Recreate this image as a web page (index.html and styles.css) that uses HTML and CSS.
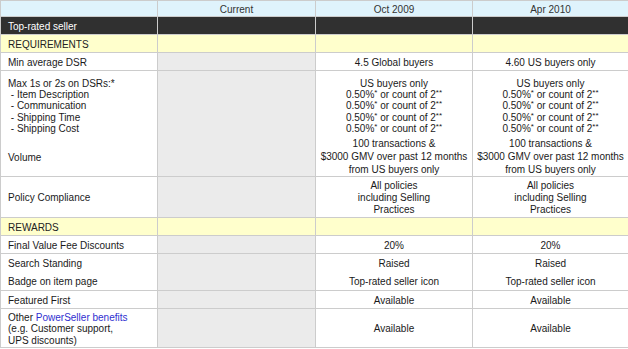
FILE: index.html
```html
<!DOCTYPE html>
<html>
<head>
<meta charset="utf-8">
<link rel="stylesheet" href="styles.css">
</head>
<body>
<table class="cmp">
  <colgroup>
    <col class="c1"><col class="c2"><col class="c3"><col class="c4">
  </colgroup>
  <tr class="head h16">
    <td></td><td class="ctr">Current</td><td class="ctr">Oct 2009</td><td class="ctr">Apr 2010</td>
  </tr>
  <tr class="dark h18">
    <td>Top-rated seller</td><td></td><td></td><td></td>
  </tr>
  <tr class="section h18">
    <td>REQUIREMENTS</td><td></td><td></td><td></td>
  </tr>
  <tr class="row h18">
    <td>Min average DSR</td><td class="cur"></td><td class="ctr">4.5 Global buyers</td><td class="ctr">4.60 US buyers only</td>
  </tr>
  <tr class="row h66 nob top">
    <td>Max 1s or 2s on DSRs:*<br>&nbsp;- Item Description<br>&nbsp;- Communication<br>&nbsp;- Shipping Time<br>&nbsp;- Shipping Cost</td>
    <td class="cur"></td>
    <td class="ctr">US buyers only<br>0.50%<sup>*</sup> or count of 2<sup>**</sup><br>0.50%<sup>*</sup> or count of 2<sup>**</sup><br>0.50%<sup>*</sup> or count of 2<sup>**</sup><br>0.50%<sup>*</sup> or count of 2<sup>**</sup></td>
    <td class="ctr">US buyers only<br>0.50%<sup>*</sup> or count of 2<sup>**</sup><br>0.50%<sup>*</sup> or count of 2<sup>**</sup><br>0.50%<sup>*</sup> or count of 2<sup>**</sup><br>0.50%<sup>*</sup> or count of 2<sup>**</sup></td>
  </tr>
  <tr class="row h40 tall">
    <td class="vmid">Volume</td>
    <td class="cur"></td>
    <td class="ctr">100 transactions &amp;<br>$3000 GMV over past 12 months<br>from US buyers only</td>
    <td class="ctr">100 transactions &amp;<br>$3000 GMV over past 12 months<br>from US buyers only</td>
  </tr>
  <tr class="row h41 mid">
    <td>Policy Compliance</td>
    <td class="cur"></td>
    <td class="ctr">All policies<br>including Selling<br>Practices</td>
    <td class="ctr">All policies<br>including Selling<br>Practices</td>
  </tr>
  <tr class="section h18">
    <td>REWARDS</td><td></td><td></td><td></td>
  </tr>
  <tr class="row h18">
    <td>Final Value Fee Discounts</td><td class="cur"></td><td class="ctr">20%</td><td class="ctr">20%</td>
  </tr>
  <tr class="row h18 nob">
    <td>Search Standing</td><td class="cur"></td><td class="ctr">Raised</td><td class="ctr">Raised</td>
  </tr>
  <tr class="row h19">
    <td>Badge on item page</td><td class="cur"></td><td class="ctr">Top-rated seller icon</td><td class="ctr">Top-rated seller icon</td>
  </tr>
  <tr class="row h18">
    <td>Featured First</td><td class="cur"></td><td class="ctr">Available</td><td class="ctr">Available</td>
  </tr>
  <tr class="row h39">
    <td>Other <a class="lnk" href="#">PowerSeller benefits</a><br>(e.g. Customer support,<br>UPS discounts)</td>
    <td class="cur"></td>
    <td class="ctr">Available</td>
    <td class="ctr">Available</td>
  </tr>
</table>
</body>
</html>
```

FILE: styles.css
```css
html, body {
  margin: 0;
  padding: 0;
  background: #ffffff;
}

.cmp {
  border-collapse: separate;
  border-spacing: 0;
  table-layout: fixed;
  width: 628px;
  border-top: 1px solid #cccccc;
  border-left: 1px solid #cccccc;
  font-family: "Liberation Sans", Arial, sans-serif;
  font-size: 10px;
  line-height: 11.4px;
  color: #1a1a1a;
}

.c1 { width: 157px; }
.c2 { width: 158px; }
.c3 { width: 157px; }
.c4 { width: 155px; }

.cmp td {
  box-sizing: border-box;
  padding: 2px 0 0 7px;
  border-right: 1px solid #cccccc;
  border-bottom: 1px solid #cccccc;
  vertical-align: middle;
  text-align: left;
  white-space: nowrap;
  overflow: hidden;
}

.cmp td:last-child {
  border-right: none;
}

.cmp td.ctr {
  text-align: center;
  padding: 2px 0 0 0;
}

.h16 td { height: 16px; }
.h18 td { height: 18px; }
.h19 td { height: 19px; }
.h39 td { height: 39px; }
.h40 td { height: 40px; }
.h41 td { height: 41px; }
.h66 td { height: 66px; }

.nob td { border-bottom: none; }

.cmp .top td {
  vertical-align: top;
  padding-top: 7px;
  line-height: 11.2px;
}

.tall td {
  line-height: 13px;
  vertical-align: top;
}

.cmp .tall td {
  padding-top: 0;
}

.cmp .tall td.vmid {
  vertical-align: middle;
  line-height: 11.4px;
  padding-top: 2px;
}

.mid td {
  line-height: 11.7px;
}

.head td {
  background: #dff3fc;
  color: #333333;
}

.dark td {
  background: #303030;
  color: #ffffff;
}

.section td {
  background: #ffffcc;
  color: #222222;
}

.row td {
  background: #ffffff;
}

.row td.cur {
  background: #ebebeb;
}

.cmp sup {
  font-size: 8px;
  line-height: 0;
  vertical-align: 3px;
}

.lnk {
  color: #2f2fd0;
  text-decoration: none;
}
```
